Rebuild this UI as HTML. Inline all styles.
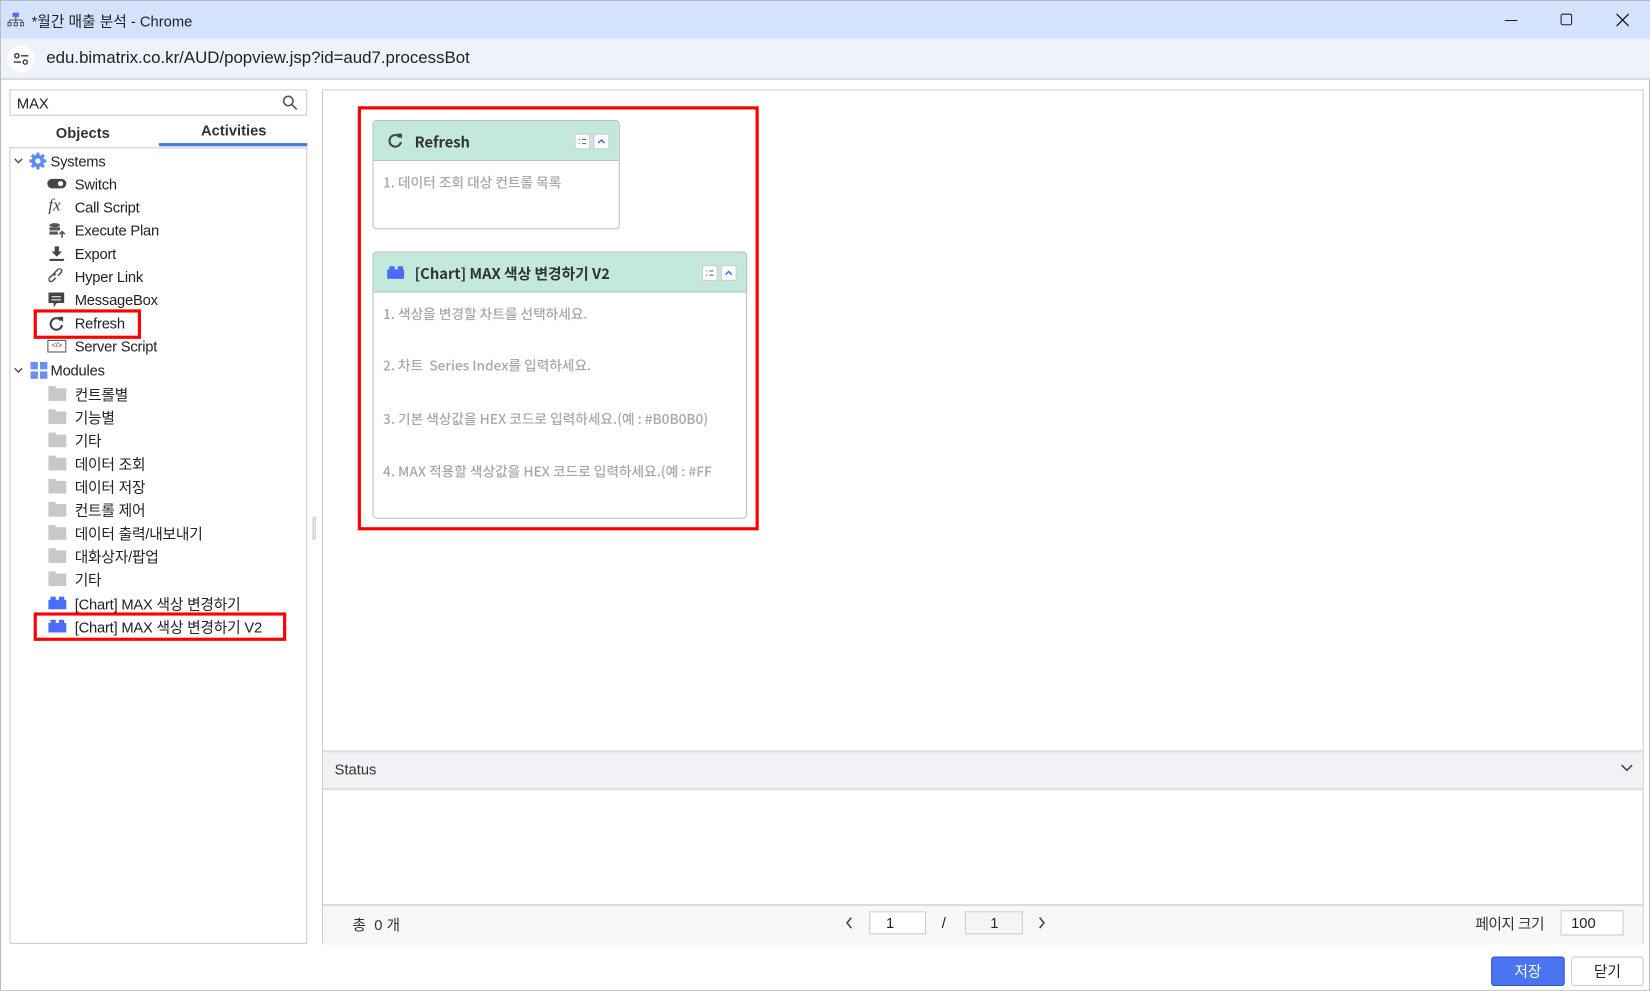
<!DOCTYPE html>
<html><head><meta charset="utf-8"><style>
html,body{margin:0;padding:0;width:1650px;height:991px;overflow:hidden;background:#fff}
#w{position:absolute;left:0;top:0;width:1568px;height:942px;transform:scale(1.05230);transform-origin:0 0;font-family:"Liberation Sans","Noto Sans CJK KR",sans-serif;color:#222;background:#fff;border:1px solid #bbb;box-sizing:border-box}
.a{position:absolute}
.t{font-size:14px;white-space:nowrap}
.row{position:absolute;left:70px;font-size:14px;white-space:nowrap;color:#222;letter-spacing:-0.2px}
.fold{position:absolute;left:45px;width:17px;height:12px;background:#c8c8c8}
.fold:before{content:"";position:absolute;left:0;top:-2px;width:7px;height:3px;background:#c8c8c8}
.lego{position:absolute;left:45px;width:17px;height:9px;background:#4a6cf7}
.lego:before,.lego:after{content:"";position:absolute;top:-3px;width:5px;height:4px;background:#4a6cf7}
.lego:before{left:2px}.lego:after{left:10px}
.card{position:absolute;border:1px solid #bdbdbd;border-radius:4px;background:#fff;overflow:hidden}
.ch{height:37px;background:#c3e8dc;border-bottom:1px solid #b0c8c0;position:relative}
.ch b{position:absolute;left:39px;top:10px;font-size:14px;color:#333;font-family:"Noto Sans CJK KR","Liberation Sans",sans-serif}
.btn{position:absolute;top:12px;width:15px;height:15px}
.it{position:absolute;left:9px;font-size:13px;color:#a8a8a8;white-space:nowrap;font-family:"Noto Sans CJK KR","Liberation Sans",sans-serif;font-weight:500}
.red{position:absolute;border:3px solid #f00;box-sizing:border-box}
</style></head><body><div id="w">
<div class="a" style="left:0;top:0;width:1568px;height:36px;background:#d3e3fd"></div>
<svg class="a" style="left:6px;top:11px" width="16" height="14" viewBox="0 0 16 14"><rect x="5" y="0" width="6" height="4" fill="#4a6cf7"/><path d="M8 4v3M2 7h12M2 7v2M8 7v2M14 7v2" stroke="#555" fill="none"/><rect x="0.5" y="9.5" width="3" height="3" fill="none" stroke="#555"/><rect x="6.5" y="9.5" width="3" height="3" fill="none" stroke="#555"/><rect x="12.5" y="9.5" width="3" height="3" fill="none" stroke="#555"/></svg>
<div class="a t" style="left:29px;top:9px;color:#222">*월간 매출 분석 - Chrome</div>
<div class="a" style="left:1429px;top:18px;width:12px;height:1px;background:#222"></div>
<div class="a" style="left:1482px;top:12px;width:11px;height:11px;border:1.5px solid #222;border-radius:2px;box-sizing:border-box"></div>
<svg class="a" style="left:1535px;top:12px" width="12" height="12"><path d="M0 0L12 12M12 0L0 12" stroke="#222" stroke-width="1.3"/></svg>
<div class="a" style="left:0;top:36px;width:1568px;height:37px;background:#eef2fa;border-bottom:2px solid #d8dbe0"></div>
<div class="a" style="left:6px;top:42px;width:26px;height:26px;border-radius:13px;background:#fff"></div>
<svg class="a" style="left:12px;top:48px" width="14" height="14"><circle cx="3" cy="4" r="2" fill="none" stroke="#333" stroke-width="1.3"/><path d="M7 4h7M0 10h7" stroke="#333" stroke-width="1.3"/><circle cx="11" cy="10" r="2" fill="none" stroke="#333" stroke-width="1.3"/></svg>
<div class="a" style="left:43px;top:46px;font-size:16px;color:#222">edu.bimatrix.co.kr/AUD/popview.jsp?id=aud7.processBot</div>
<div class="a" style="left:8px;top:84px;width:283px;height:25px;border:1px solid #ccc;box-sizing:border-box"></div>
<div class="a t" style="left:15px;top:89px">MAX</div>
<svg class="a" style="left:267px;top:89px" width="15" height="15"><circle cx="6" cy="6" r="4.5" fill="none" stroke="#555" stroke-width="1.5"/><path d="M9.5 9.5L14 14" stroke="#555" stroke-width="1.5"/></svg>
<div class="a t" style="left:52px;top:117px;font-weight:bold;color:#333">Objects</div>
<div class="a t" style="left:190px;top:115px;font-weight:bold;color:#333">Activities</div>
<div class="a" style="left:150px;top:135px;width:141px;height:3px;background:#3c7be0"></div>
<div class="a" style="left:8px;top:139px;width:283px;height:757px;border:1px solid #ccc;box-sizing:border-box"></div>
<svg class="a" style="left:12px;top:149px" width="9" height="6"><path d="M1 1l3.5 3.5L8 1" stroke="#444" fill="none" stroke-width="1.3"/></svg>
<svg class="a" style="left:26px;top:143px" width="18" height="18" viewBox="0 0 18 18"><circle cx="9" cy="9" r="6" fill="#5b8def"/><g stroke="#5b8def" stroke-width="3"><path d="M9 1v16M1 9h16M3.3 3.3l11.4 11.4M14.7 3.3L3.3 14.7"/></g><circle cx="9" cy="9" r="2.5" fill="#fff"/></svg>
<div class="a t" style="left:47px;top:144px;letter-spacing:-0.2px">Systems</div>
<div class="row" style="top:166px">Switch</div>
<div class="a" style="left:44px;top:169px;width:18px;height:9px;border-radius:5px;background:#444"></div><div class="a" style="left:54px;top:171px;width:5px;height:5px;border-radius:3px;background:#fff"></div>
<div class="row" style="top:188px">Call Script</div>
<div class="a" style="left:45px;top:186px;font-style:italic;font-family:'Liberation Serif',serif;font-size:16px;color:#444">fx</div>
<div class="row" style="top:210px">Execute Plan</div>
<svg class="a" style="left:45px;top:210px" width="16" height="16"><ellipse cx="6" cy="3" rx="5" ry="2" fill="#555"/><rect x="1" y="5" width="10" height="3" fill="#555"/><rect x="1" y="9" width="8" height="3" fill="#555"/><path d="M13 15V9M10.5 11.5L13 9l2.5 2.5" stroke="#555" fill="none" stroke-width="1.5"/></svg>
<div class="row" style="top:232px">Export</div>
<svg class="a" style="left:46px;top:233px" width="14" height="14"><path d="M5 0h4v5h3L7 10 2 5h3z" fill="#444"/><rect x="0" y="12" width="14" height="2" fill="#444"/></svg>
<div class="row" style="top:254px">Hyper Link</div>
<svg class="a" style="left:45px;top:254px" width="16" height="16"><g fill="none" stroke="#555" stroke-width="1.5"><path d="M7 9l-3 3a2 2 0 0 1-3-3l3-3a2 2 0 0 1 3 0"/><path d="M9 7l3-3a2 2 0 0 0-3-3l-3 3a2 2 0 0 0 0 3"/></g></svg>
<div class="row" style="top:276px">MessageBox</div>
<svg class="a" style="left:45px;top:277px" width="16" height="15"><path d="M0 0h15v10H8l-3 4v-4H0z" fill="#444"/><path d="M3 4h9M3 7h9" stroke="#fff"/></svg>
<div class="row" style="top:298px">Refresh</div>
<svg class="a" style="left:45px;top:299px" width="15" height="15" viewBox="0 0 15 15"><path d="M12 4.5A5.5 5.5 0 1 0 13 9" fill="none" stroke="#444" stroke-width="2"/><path d="M9 1h5v5z" fill="#444"/></svg>
<div class="row" style="top:320px">Server Script</div>
<div class="a" style="left:44px;top:322px;width:18px;height:12px;border:1px solid #555;box-sizing:border-box;font-size:7px;text-align:center;line-height:10px;color:#444">&lt;/&gt;</div>
<div class="red" style="left:31px;top:293px;width:102px;height:28px"></div>
<svg class="a" style="left:12px;top:348px" width="9" height="6"><path d="M1 1l3.5 3.5L8 1" stroke="#444" fill="none" stroke-width="1.3"/></svg>
<div class="a" style="left:28px;top:343px;width:7px;height:7px;background:#6b8ff5"></div><div class="a" style="left:37px;top:343px;width:7px;height:7px;background:#6b8ff5"></div><div class="a" style="left:28px;top:352px;width:7px;height:7px;background:#6b8ff5"></div><div class="a" style="left:37px;top:352px;width:7px;height:7px;background:#6b8ff5"></div>
<div class="a t" style="left:47px;top:343px;letter-spacing:-0.2px">Modules</div>
<div class="fold" style="top:368px"></div><div class="row" style="top:364px">컨트롤별</div>
<div class="fold" style="top:390px"></div><div class="row" style="top:386px">기능별</div>
<div class="fold" style="top:412px"></div><div class="row" style="top:408px">기타</div>
<div class="fold" style="top:434px"></div><div class="row" style="top:430px">데이터 조회</div>
<div class="fold" style="top:456px"></div><div class="row" style="top:452px">데이터 저장</div>
<div class="fold" style="top:478px"></div><div class="row" style="top:474px">컨트롤 제어</div>
<div class="fold" style="top:500px"></div><div class="row" style="top:496px">데이터 출력/내보내기</div>
<div class="fold" style="top:522px"></div><div class="row" style="top:518px">대화상자/팝업</div>
<div class="fold" style="top:544px"></div><div class="row" style="top:540px">기타</div>
<div class="lego" style="top:569px"></div><div class="row" style="top:563px">[Chart] MAX 색상 변경하기</div>
<div class="lego" style="top:591px"></div><div class="row" style="top:585px">[Chart] MAX 색상 변경하기 V2</div>
<div class="red" style="left:31px;top:581px;width:240px;height:27px"></div>
<div class="a" style="left:296px;top:490px;width:3px;height:22px;border-left:1px solid #bbb;border-right:1px solid #bbb;box-sizing:border-box"></div>
<div class="a" style="left:305px;top:84px;width:1256px;height:812px;border:1px solid #ccc;box-sizing:border-box"></div>
<div class="a" style="left:306px;top:712px;width:1254px;height:34px;background:#f2f2f6;border-top:2px solid #ddd;border-bottom:2px solid #ddd"></div>
<div class="a t" style="left:317px;top:722px;color:#333">Status</div>
<svg class="a" style="left:1539px;top:725px" width="12" height="8"><path d="M1 1l5 5 5-5" stroke="#444" fill="none" stroke-width="1.5"/></svg>
<div class="a" style="left:306px;top:858px;width:1254px;height:37px;background:#f8f8fa;border-top:2px solid #ddd"></div>
<div class="a t" style="left:334px;top:868px;color:#333">총 &nbsp;0 개</div>
<svg class="a" style="left:802px;top:870px" width="8" height="12"><path d="M6 1L2 6l4 5" stroke="#444" fill="none" stroke-width="1.5"/></svg>
<div class="a" style="left:825px;top:865px;width:54px;height:22px;border:1px solid #ccc;background:#fff;box-sizing:border-box;font-size:14px;padding:2px 0 0 15px">1</div>
<div class="a t" style="left:894px;top:868px">/</div>
<div class="a" style="left:916px;top:865px;width:55px;height:22px;border:1px solid #ccc;background:#f5f5f5;box-sizing:border-box;font-size:14px;padding:2px 0 0 23px">1</div>
<svg class="a" style="left:985px;top:870px" width="8" height="12"><path d="M2 1l4 5-4 5" stroke="#444" fill="none" stroke-width="1.5"/></svg>
<div class="a t" style="left:1401px;top:867px;color:#333;letter-spacing:-0.5px">페이지 크기</div>
<div class="a" style="left:1482px;top:864px;width:60px;height:24px;border:1px solid #ccc;background:#fff;box-sizing:border-box;font-size:14px;padding:3px 0 0 9px">100</div>
<div class="a" style="left:1416px;top:908px;width:70px;height:28px;background:#4a74f0;border:1px solid #2f55cc;border-radius:3px;box-sizing:border-box;color:#fff;font-size:14px;text-align:center;line-height:26px">저장</div>
<div class="a" style="left:1492px;top:908px;width:69px;height:28px;background:#fff;border:1px solid #ccc;border-radius:3px;box-sizing:border-box;color:#222;font-size:14px;text-align:center;line-height:26px">닫기</div>
<div class="red" style="left:339px;top:100px;width:381px;height:403px"></div>
<div class="card" style="left:353px;top:113px;width:233px;height:102px">
<div class="ch"><svg class="a" style="left:13px;top:11px" width="15" height="15" viewBox="0 0 15 15"><path d="M12 4.5A5.5 5.5 0 1 0 13 9" fill="none" stroke="#444" stroke-width="2"/><path d="M9 1h5v5z" fill="#444"/></svg><b>Refresh</b>
<svg class="btn" style="left:191px" viewBox="0 0 15 15"><rect x=".5" y=".5" width="14" height="14" fill="#fff" stroke="#ccc"/><path d="M4 5.5h1M4 9.5h1M7 5.5h4M7 9.5h4" stroke="#666"/></svg>
<svg class="btn" style="left:209px" viewBox="0 0 15 15"><rect x=".5" y=".5" width="14" height="14" fill="#fff" stroke="#ccc"/><path d="M4.5 9l3-3 3 3" stroke="#4a6cf7" fill="none" stroke-width="1.5"/></svg></div>
<div class="it" style="top:48px">1. 데이터 조회 대상 컨트롤 목록</div>
</div>
<div class="card" style="left:353px;top:238px;width:354px;height:252px">
<div class="ch"><div class="lego" style="left:13px;top:16px;width:16px"></div><b>[Chart] MAX 색상 변경하기 V2</b>
<svg class="btn" style="left:312px" viewBox="0 0 15 15"><rect x=".5" y=".5" width="14" height="14" fill="#fff" stroke="#ccc"/><path d="M4 5.5h1M4 9.5h1M7 5.5h4M7 9.5h4" stroke="#666"/></svg>
<svg class="btn" style="left:330px" viewBox="0 0 15 15"><rect x=".5" y=".5" width="14" height="14" fill="#fff" stroke="#ccc"/><path d="M4.5 9l3-3 3 3" stroke="#4a6cf7" fill="none" stroke-width="1.5"/></svg></div>
<div class="it" style="top:48px">1. 색상을 변경할 차트를 선택하세요.</div>
<div class="it" style="top:97px">2. 차트 &nbsp;Series Index를 입력하세요.</div>
<div class="it" style="top:148px">3. 기본 색상값을 HEX 코드로 입력하세요.(예 : #B0B0B0)</div>
<div class="it" style="top:198px">4. MAX 적용할 색상값을 HEX 코드로 입력하세요.(예 : #FF</div>
</div>
</div></body></html>
